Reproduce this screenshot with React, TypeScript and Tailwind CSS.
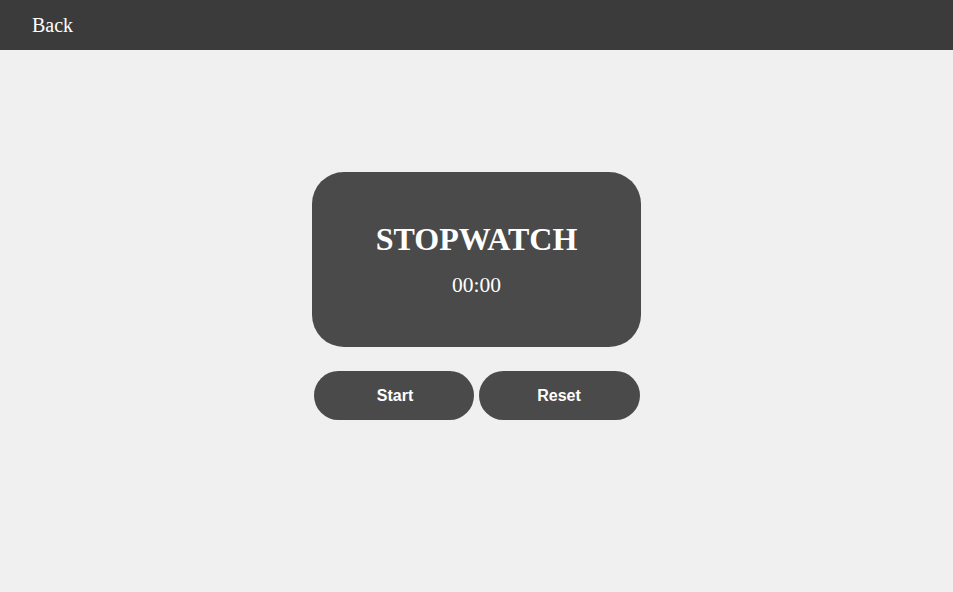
import React from "react";

export default function App() {
  return (
    <div className="min-h-[592px] w-full bg-[#f0f0f0]" style={{ fontFamily: '"Liberation Serif", serif' }}>
      <header className="h-[50px] bg-[#3b3b3b] flex items-center pl-[32px]">
        <span className="text-white text-[20px] leading-none">Back</span>
      </header>
      <main className="flex flex-col items-center pt-[122px]">
        <div className="w-[329px] h-[175px] rounded-[32px] bg-[#4a4a4a] flex flex-col items-center justify-center gap-[16px] pb-[2px]">
          <h1 className="text-white font-bold text-[32px] leading-[36px]">STOPWATCH</h1>
          <div className="text-white text-[21.5px] leading-[24px]">00:00</div>
        </div>
        <div className="mt-[24px] flex gap-[5px]" style={{ fontFamily: '"Liberation Sans", Arial, sans-serif' }}>
          <button className="w-[160px] h-[49px] pl-[3px] rounded-full bg-[#4a4a4a] text-white font-bold text-[16px]">Start</button>
          <button className="w-[161px] h-[49px] rounded-full bg-[#4a4a4a] text-white font-bold text-[16px]">Reset</button>
        </div>
      </main>
    </div>
  );
}
